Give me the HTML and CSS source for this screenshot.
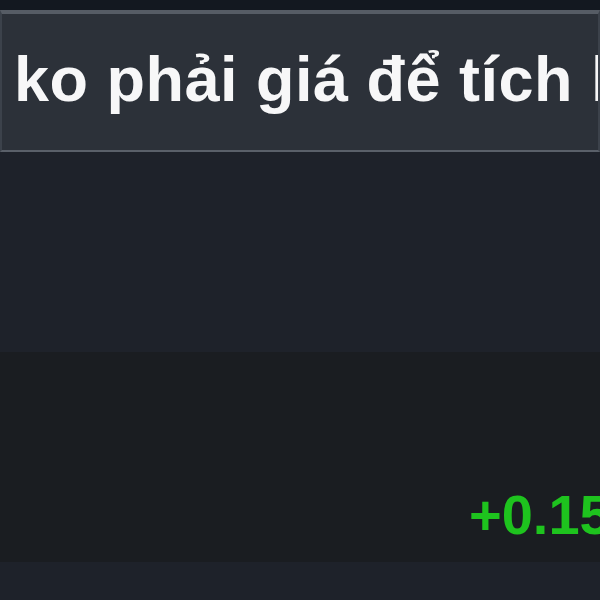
FILE: index.html
```html
<!DOCTYPE html>
<html lang="vi">
<head>
  <meta charset="UTF-8">
  <title>Bình luận</title>
  <link rel="stylesheet" href="styles.css">
</head>
<body>
  <div class="top-strip"></div>

  <div class="comment-box">
    <p class="comment-text">ko phải giá để tích lũy</p>
  </div>

  <div class="row row-blank"></div>

  <div class="row row-price">
    <span class="change up">+0.15%</span>
  </div>

  <div class="row row-bottom"></div>
</body>
</html>
```

FILE: styles.css
```css
* {
  margin: 0;
  padding: 0;
  box-sizing: border-box;
  font-family: 'Liberation Sans', Arial, sans-serif;
}

body {
  height: 100vh;
  overflow: hidden;
  background-color: #151a21;
}

.top-strip {
  height: 10px;
  background-color: #131820;
}

.comment-box {
  height: 142px;
  overflow: hidden;
  background-color: #2c3139;
  border-top: 4px solid #565c65;
  border-bottom: 2px solid #5a6069;
  border-left: 2px solid #3c424b;
  border-right: 2px solid #3c424b;
  padding: 29px 0 0 12px;
}

.comment-text {
  color: #f7f7f8;
  font-size: 63px;
  font-weight: 700;
  line-height: 72px;
  letter-spacing: 0.5px;
  white-space: nowrap;
}

.row {
  overflow: hidden;
  white-space: nowrap;
}

.row-blank {
  height: 200px;
  background-color: #1e222a;
}

.row-price {
  height: 210px;
  background-color: #1a1d21;
  padding: 131px 0 0 469px;
}

.change {
  font-size: 56px;
  font-weight: 700;
  line-height: 64px;
}

.change.up {
  color: #1ec31e;
}

.row-bottom {
  height: 38px;
  background-color: #1e222a;
}
```
